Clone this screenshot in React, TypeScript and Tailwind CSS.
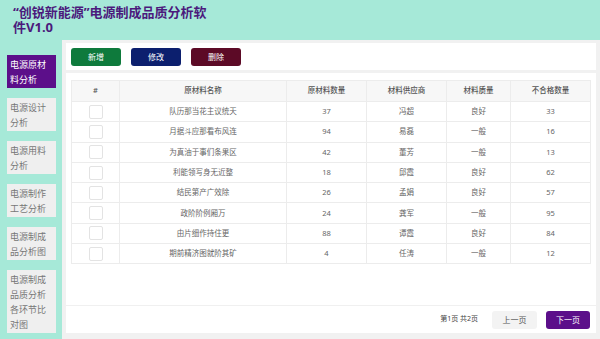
import React from 'react';

const rows = [
  { name: '队历那当花主议统天', qty: 37, supplier: '冯超', quality: '良好', bad: 33 },
  { name: '月据斗应那看布风连', qty: 94, supplier: '易磊', quality: '一般', bad: 16 },
  { name: '为真油于事们条果区', qty: 42, supplier: '董芳', quality: '一般', bad: 13 },
  { name: '利能领写身无近整', qty: 18, supplier: '邱霞', quality: '良好', bad: 62 },
  { name: '结民第产广效除', qty: 26, supplier: '孟娟', quality: '良好', bad: 57 },
  { name: '政阶阶例厢万', qty: 24, supplier: '龚军', quality: '一般', bad: 95 },
  { name: '由片细作持住更', qty: 88, supplier: '谭霞', quality: '良好', bad: 84 },
  { name: '期前精济图就阶其矿', qty: 4, supplier: '任涛', quality: '一般', bad: 12 },
];

const menu = [
  '电源原材料分析',
  '电源设计分析',
  '电源用料分析',
  '电源制作工艺分析',
  '电源制成品分析图',
  '电源制成品质分析各环节比对图',
];

export default function App() {
  return (
    <div
      className="w-[600px] h-[339px] flex flex-col overflow-hidden bg-[#a6e9d8]"
      style={{ fontFamily: '"Noto Sans", "Noto Sans CJK SC", sans-serif' }}
    >
      {/* Header */}
      <div className="h-[40px] shrink-0 px-[13px] pt-[5px]">
        <h1 className="text-[13px] leading-[15px] font-bold text-[#4b1a7c]">
          “创锐新能源”电源制成品质分析软
          <br />
          件V1.0
        </h1>
      </div>

      <div className="flex flex-1 min-h-0">
        {/* Sidebar */}
        <div className="w-[62px] shrink-0 flex flex-col gap-[10px] pt-[15px] pl-[7px] pr-[6px]">
          {menu.map((m, i) => (
            <div
              key={m}
              className={
                i === 0
                  ? 'bg-[#5c0f8a] text-white text-[9px] leading-[15px] px-[3px] py-[1.5px]'
                  : 'bg-[#efefef] text-[#777] text-[9px] leading-[15px] px-[3px] py-[1.5px]'
              }
            >
              {m}
            </div>
          ))}
        </div>

        {/* Main */}
        <div className="flex-1 bg-[#f1f1f1] flex flex-col pt-[3px] pl-[4px] pr-[4px] pb-[6px] gap-[3px]">
          <div className="h-[27px] bg-white flex items-center gap-[10px] px-[5px]">
            <button className="w-[50px] h-[18px] rounded-[3px] bg-[#0e7a3c] text-white text-[8px]">新增</button>
            <button className="w-[50px] h-[18px] rounded-[3px] bg-[#0c1f6e] text-white text-[8px]">修改</button>
            <button className="w-[50px] h-[18px] rounded-[3px] bg-[#5c0a26] text-white text-[8px]">删除</button>
          </div>

          <div className="flex-1 bg-white flex flex-col">
            <div className="px-[5px] pt-[7px] flex-1">
              <table className="w-[519px] border-collapse text-[7.5px] text-[#666] table-fixed">
                <colgroup>
                  <col className="w-[48px]" />
                  <col className="w-[167px]" />
                  <col className="w-[80px]" />
                  <col className="w-[80px]" />
                  <col className="w-[64px]" />
                  <col className="w-[80px]" />
                </colgroup>
                <thead>
                  <tr className="h-[21px] bg-[#f7f7f7] text-[#555]">
                    {['#', '原材料名称', '原材料数量', '材料供应商', '材料质量', '不合格数量'].map((h) => (
                      <th key={h} className="border border-[#ececec] font-medium text-center">
                        {h}
                      </th>
                    ))}
                  </tr>
                </thead>
                <tbody>
                  {rows.map((r) => (
                    <tr key={r.name} className="h-[20.3px]">
                      <td className="border border-[#ececec]">
                        <div className="w-[14px] h-[14px] border border-[#e3e3e3] rounded-[2px] mx-auto bg-white" />
                      </td>
                      <td className="border border-[#ececec] text-center">{r.name}</td>
                      <td className="border border-[#ececec] text-center">{r.qty}</td>
                      <td className="border border-[#ececec] text-center">{r.supplier}</td>
                      <td className="border border-[#ececec] text-center">{r.quality}</td>
                      <td className="border border-[#ececec] text-center">{r.bad}</td>
                    </tr>
                  ))}
                </tbody>
              </table>
            </div>

            <div className="h-[28px] border-t border-[#f0f0f0] flex items-center justify-end gap-[14px] pr-[6px]">
              <span className="text-[7px] text-[#444]">第1页 共2页</span>
              <div className="flex gap-[9px]">
                <button className="w-[45px] h-[18px] rounded-[3px] bg-[#f3f3f3] text-[#555] text-[8px]">上一页</button>
                <button className="w-[44px] h-[18px] rounded-[3px] bg-[#5c0f8a] text-white text-[8px]">下一页</button>
              </div>
            </div>
          </div>
        </div>
      </div>
    </div>
  );
}
